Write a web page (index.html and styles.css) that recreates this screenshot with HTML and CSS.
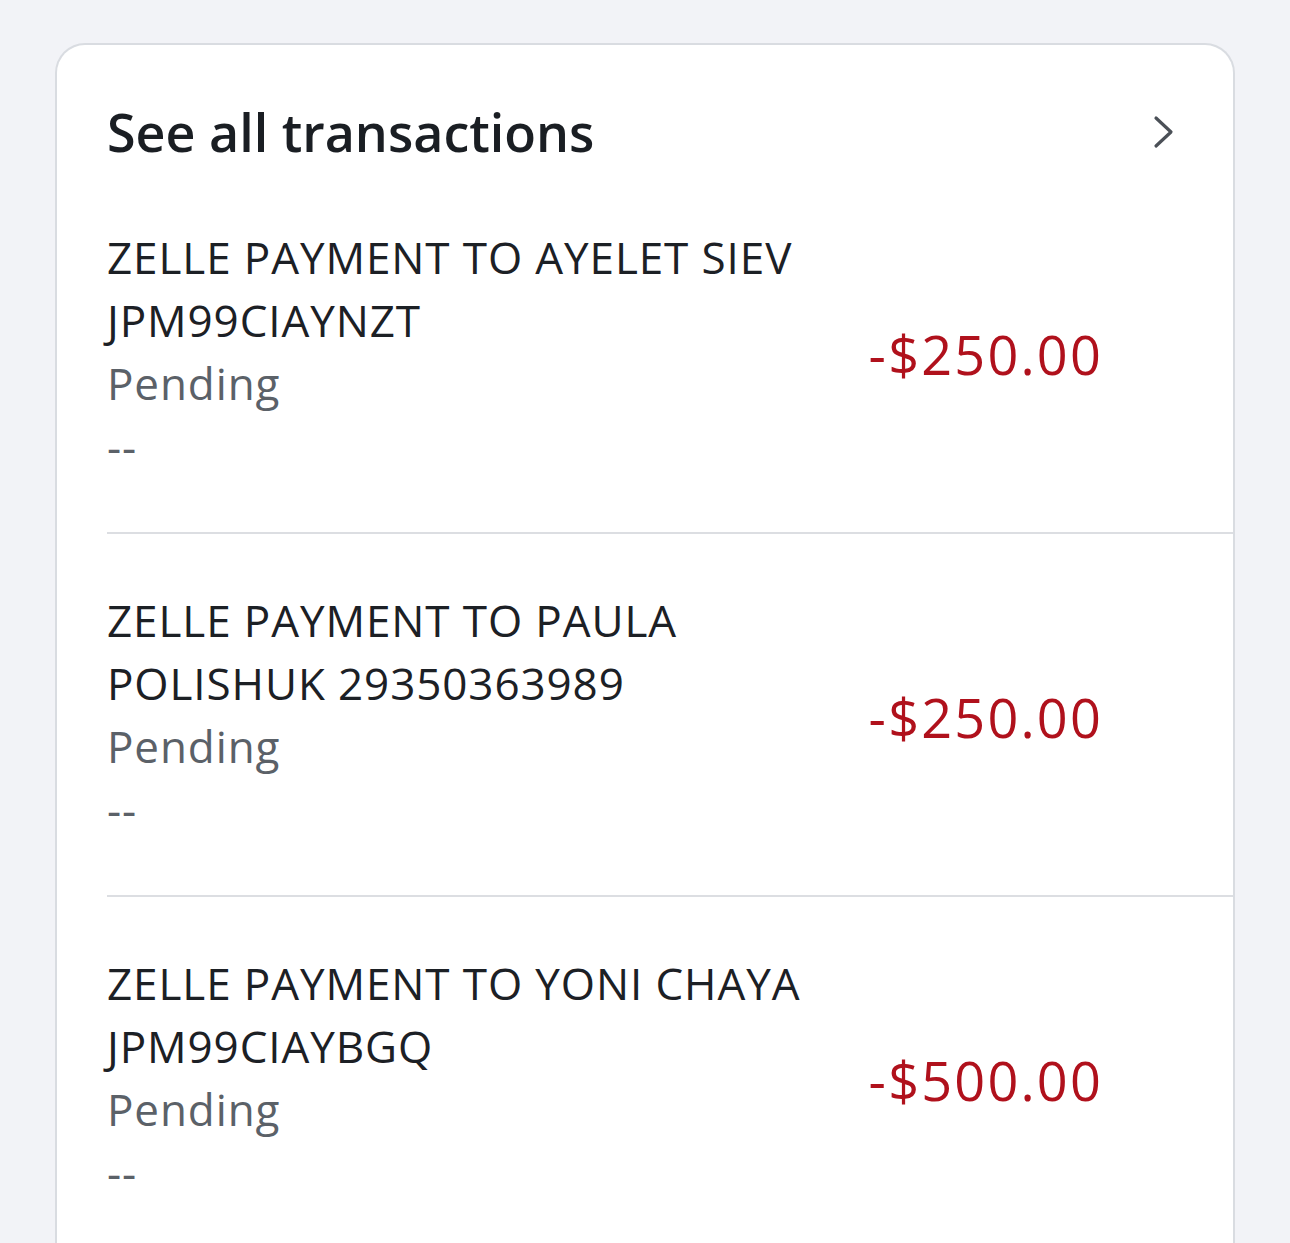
FILE: index.html
```html
<!DOCTYPE html>
<html lang="en">
<head>
    <meta charset="UTF-8">
    <meta name="viewport" content="width=device-width, initial-scale=1.0">
    <title>Transactions</title>
    <link rel="stylesheet" href="styles.css">
</head>
<body>
    <div class="card">
        <div class="card-head">
            <h2>See all transactions</h2>
            <svg class="chevron" width="22" height="34" viewBox="0 0 22 34">
                <path d="M3 3 L18 17 L3 31" fill="none" stroke="#4b5057" stroke-width="3.2" stroke-linecap="round" stroke-linejoin="round"/>
            </svg>
        </div>

        <div class="txn">
            <div class="txn-info">
                <div class="txn-name">ZELLE PAYMENT TO AYELET SIEV JPM99CIAYNZT</div>
                <div class="txn-status">Pending</div>
                <div class="txn-date">--</div>
            </div>
            <div class="txn-amount">-$250.00</div>
        </div>

        <div class="txn">
            <div class="txn-info">
                <div class="txn-name">ZELLE PAYMENT TO PAULA POLISHUK 29350363989</div>
                <div class="txn-status">Pending</div>
                <div class="txn-date">--</div>
            </div>
            <div class="txn-amount">-$250.00</div>
        </div>

        <div class="txn">
            <div class="txn-info">
                <div class="txn-name">ZELLE PAYMENT TO YONI CHAYA JPM99CIAYBGQ</div>
                <div class="txn-status">Pending</div>
                <div class="txn-date">--</div>
            </div>
            <div class="txn-amount">-$500.00</div>
        </div>
    </div>
</body>
</html>
```

FILE: styles.css
```css
body {
margin: 0;
background-color: #f2f3f7;
font-family: "Open Sans", "Noto Sans", sans-serif;
color: #1c2025;
overflow: hidden;
}

/* the white card */
.card {
margin: 43px 55px 0 55px;
background-color: #fff;
border: 2px solid #d9dce1;
border-bottom: none;
border-radius: 30px 30px 0 0;
height: 1300px;
box-sizing: border-box;
}

.card-head {
display: flex;
align-items: center;
justify-content: space-between;
padding: 48px 58px 0 50px;
height: 126px;
box-sizing: border-box;
}

.card-head h2 {
margin: 0;
font-size: 52px;
font-weight: 600;
line-height: 60px;
color: #1a1e23;
}

/* one transaction */
.txn {
display: flex;
align-items: center;
justify-content: space-between;
margin-left: 50px;
padding: 55px 130px 54px 0;
border-bottom: 2px solid #dcdee2;
}

.txn:last-child {
border-bottom: none;
}

.txn-info {
font-size: 44px;
letter-spacing: 0.9px;
line-height: 63px;
width: 720px;
}

.txn-status,
.txn-date {
color: #5b6168;
}

.txn-amount {
font-size: 54px;
letter-spacing: 2.2px;
color: #b0111c;
margin-top: 4px;
}
```
